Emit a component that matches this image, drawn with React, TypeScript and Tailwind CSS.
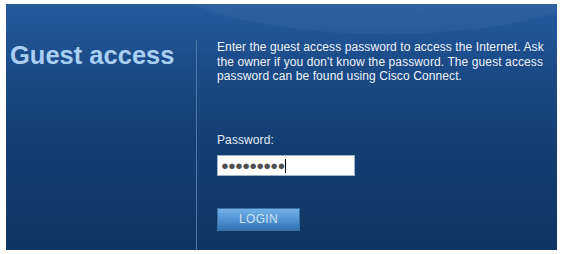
export default function App() {
  return (
    <div className="h-[254px] w-[562px] bg-white pl-[6px] pt-[4px] font-['Liberation_Sans',Arial,sans-serif]">
      <div className="relative flex h-[246px] w-[551px] overflow-hidden bg-[linear-gradient(180deg,#265b9e_0%,#1b4b88_25%,#133f74_55%,#0e3663_100%)]">
        {/* soft swooshes in the top of the panel */}
        <div className="pointer-events-none absolute left-[-80px] top-[-60px] h-[150px] w-[500px] rounded-[50%] border-t-[6px] border-white/[0.04]" />
        <div className="pointer-events-none absolute left-[150px] top-[-100px] h-[130px] w-[460px] rounded-[50%] bg-white/[0.035]" />

        <div className="w-[190px] shrink-0 pl-[4px] pt-[36px]">
          <h1 className="text-[25.5px] font-bold leading-[30px] text-[#a9d0f2]">Guest access</h1>
        </div>

        <div className="mt-[36px] w-[1px] shrink-0 bg-[#4d77a8]" />

        <div className="flex flex-col pl-[20px] pt-[36px] text-[12px] leading-[14.5px] tracking-[0.1px] text-[#eef3fa]">
          <p className="w-[340px]">
            Enter the guest access password to access the Internet. Ask the owner if you don't know the password. The guest access password can be found using Cisco Connect.
          </p>
          <label className="mt-[49px] text-[#e4ecf6]">Password:</label>
          <div className="mt-[8px] flex h-[21px] w-[138px] items-center border border-[#9fb4cc] bg-white pl-[3px]">
            <span className="text-[13px] leading-none tracking-[-0.8px] text-[#505050]">●●●●●●●●●</span>
            <span className="ml-[1px] h-[14px] w-[1px] bg-black" />
          </div>
          <button className="mt-[32px] h-[23px] w-[83px] border border-[#3a6fa8] bg-[linear-gradient(180deg,#72b0e6_0%,#5597d6_45%,#3172b4_100%)] text-[12px] tracking-[0.3px] text-[#cfe2f6]">
            LOGIN
          </button>
        </div>
      </div>
    </div>
  );
}
